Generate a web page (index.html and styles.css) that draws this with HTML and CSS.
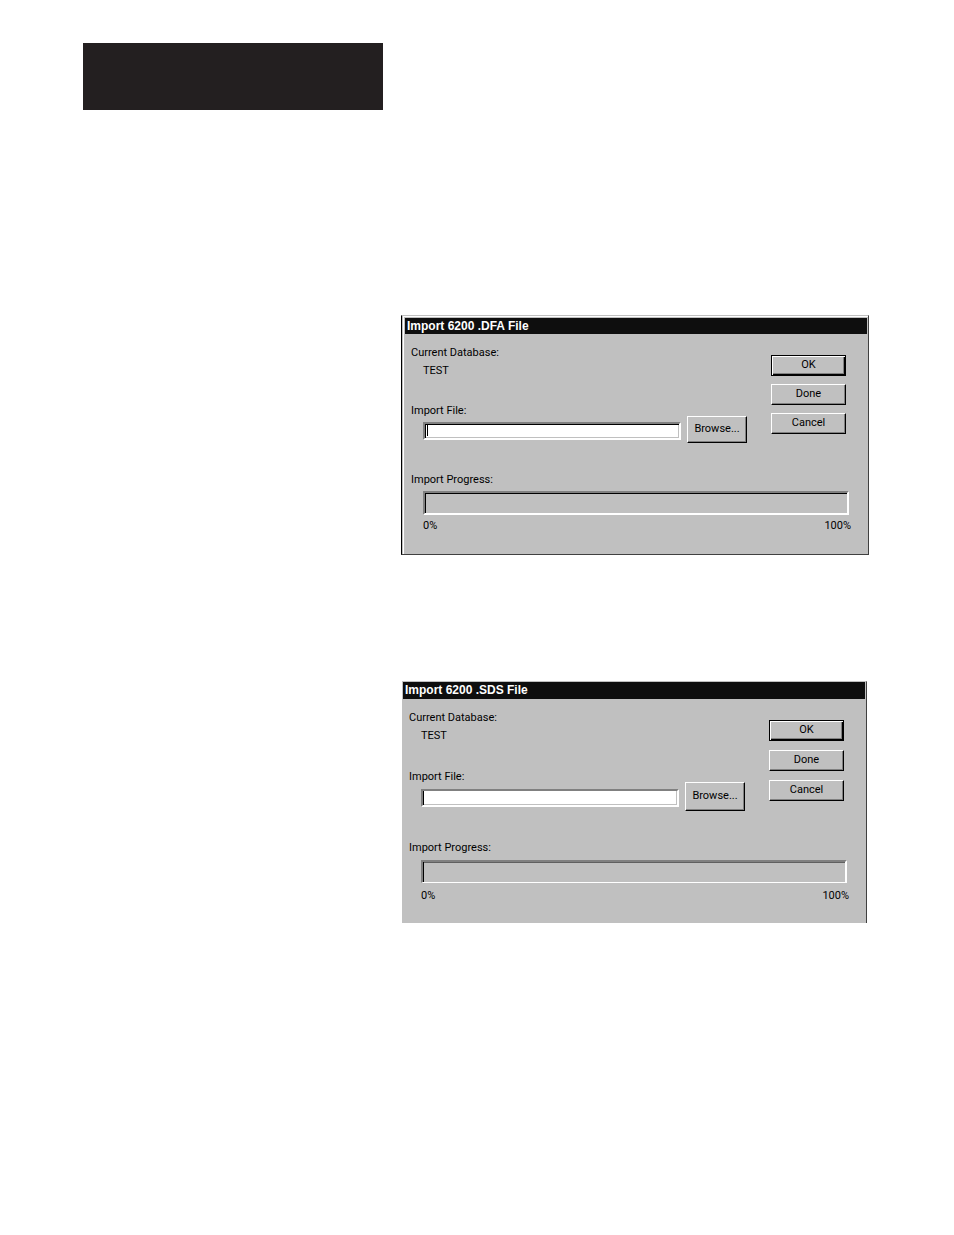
FILE: index.html
```html
<!DOCTYPE html>
<html lang="en">
<head>
    <meta charset="UTF-8">
    <meta name="viewport" content="width=device-width, initial-scale=1.0">
    <title>Import 6200 Files</title>
    <link rel="stylesheet" href="styles.css">
</head>
<body>

<header class="banner"></header>

<main class="figures">
    <form class="dialog">
        <h2 class="title">Import 6200 .DFA File</h2>
        <div class="body">
            <div class="top">
                <div class="fields">
                    <p>Current Database:</p>
                    <p class="value">TEST</p>
                    <div class="file">
                        <label for="dfaFile">Import File:</label>
                        <input type="text" id="dfaFile" class="active">
                        <button type="button" class="browse">Browse...</button>
                    </div>
                </div>
                <div class="actions">
                    <button type="submit" class="default">OK</button>
                    <button type="button">Done</button>
                    <button type="button">Cancel</button>
                </div>
            </div>
            <div class="progress">
                <p id="dfaProgress">Import Progress:</p>
                <div class="bar" role="progressbar" aria-labelledby="dfaProgress" aria-valuenow="0"></div>
                <div class="scale"><span>0%</span><span>100%</span></div>
            </div>
        </div>
    </form>

    <form class="dialog sds">
        <h2 class="title">Import 6200 .SDS File</h2>
        <div class="body">
            <div class="top">
                <div class="fields">
                    <p>Current Database:</p>
                    <p class="value">TEST</p>
                    <div class="file">
                        <label for="sdsFile">Import File:</label>
                        <input type="text" id="sdsFile">
                        <button type="button" class="browse">Browse...</button>
                    </div>
                </div>
                <div class="actions">
                    <button type="submit" class="default">OK</button>
                    <button type="button">Done</button>
                    <button type="button">Cancel</button>
                </div>
            </div>
            <div class="progress">
                <p id="sdsProgress">Import Progress:</p>
                <div class="bar" role="progressbar" aria-labelledby="sdsProgress" aria-valuenow="0"></div>
                <div class="scale"><span>0%</span><span>100%</span></div>
            </div>
        </div>
    </form>
</main>

</body>
</html>
```
FILE: styles.css
```css
* {
    box-sizing: border-box;
}
body {
    margin: 0;
    padding: 43px 85px 43px 83px;
    background: #fff;
    color: #000;
    font-family: Roboto, "Liberation Sans", Arial, sans-serif;
    font-size: 11px;
    line-height: 18px;
}
p {
    margin: 0;
}
.banner {
    max-width: 300px;
    height: 67px;
    background: #231f20;
}
.figures {
    margin: 205px 0 0 318px;
}

/* Dialog window */
.dialog {
    padding: 2px 1px 0 3px;
    background: #c0c0c0;
    border: 1px solid #404040;
    border-top-color: #c0c0c0;
    border-left-color: #000;
    box-shadow: inset 1px 0 #c0c0c0, inset 2px 1px #fff;
}
.title {
    margin: 0;
    padding-left: 2px;
    background: #0e0e0e;
    color: #fff;
    font-family: "Liberation Sans", Arial, sans-serif;
    font-size: 12px;
    line-height: 16px;
}
.body {
    padding: 10px 16px 19px 6px;
}
.top {
    display: flex;
    justify-content: space-between;
}
.fields {
    flex: 1;
}
.value {
    padding-left: 12px;
}

/* File row, the Browse button reaches up beside the label */
.file {
    display: grid;
    grid-template-columns: 1fr 60px;
    column-gap: 6px;
    row-gap: 2px;
    margin-top: 22px;
}
.file input {
    width: auto;
    min-width: 0;
    height: 18px;
    margin: 0 0 3px 12px;
    padding: 0 4px;
    border: 2px solid;
    border-color: #808080 #fff #fff #808080;
    background: #fff;
    box-shadow: inset 1px 1px #000, inset -1px -1px #c0c0c0;
    font: inherit;
    line-height: 14px;
    outline: none;
}
.file input.active {
    background: linear-gradient(#000, #000) 2px 1px / 1px 11px no-repeat #fff;
}
.browse {
    grid-column: 2;
    grid-row: 1 / 3;
    align-self: end;
    height: 27px;
}

/* Buttons */
button {
    padding: 0 0 2px;
    border: 1px solid;
    border-color: #fff #000 #000 #fff;
    background: #c0c0c0;
    box-shadow: inset -1px -1px #808080;
    color: #000;
    font: inherit;
    line-height: 16px;
}
.actions {
    display: flex;
    flex-direction: column;
    gap: 8px;
    width: 75px;
    margin: 11px 5px 0 24px;
}
.actions button {
    height: 21px;
}
.actions .default {
    border-color: #000;
    box-shadow: inset 1px 1px #fff, inset -1px -1px #000, inset -2px -2px #808080;
}

/* Progress */
.progress {
    margin-top: 28px;
}
.bar {
    height: 24px;
    margin: 2px 2px 2px 12px;
    border: 2px solid;
    border-color: #808080 #fff #fff #808080;
    box-shadow: inset 1px 1px #000;
}
.scale {
    display: flex;
    justify-content: space-between;
    padding-left: 12px;
}

/* Second window, spaced a little wider */
.sds {
    margin: 126px 2px 0 1px;
    padding: 0 1px 0 0;
    border-left-color: #c0c0c0;
    border-bottom: 0;
    box-shadow: none;
}
.sds .title {
    line-height: 17px;
}
.sds .body {
    padding-bottom: 18px;
}
.sds .file {
    row-gap: 3px;
    margin-top: 23px;
}
.sds .file input {
    margin-bottom: 4px;
    box-shadow: inset 1px 0 #000, inset -1px -1px #c0c0c0;
}
.sds .browse {
    height: 29px;
}
.sds .actions {
    gap: 9px;
}
.sds .bar {
    height: 23px;
    margin-top: 3px;
    margin-bottom: 4px;
    border-bottom-width: 1px;
    box-shadow: inset 1px 0 #000, inset 0 1px #606060;
}
```
